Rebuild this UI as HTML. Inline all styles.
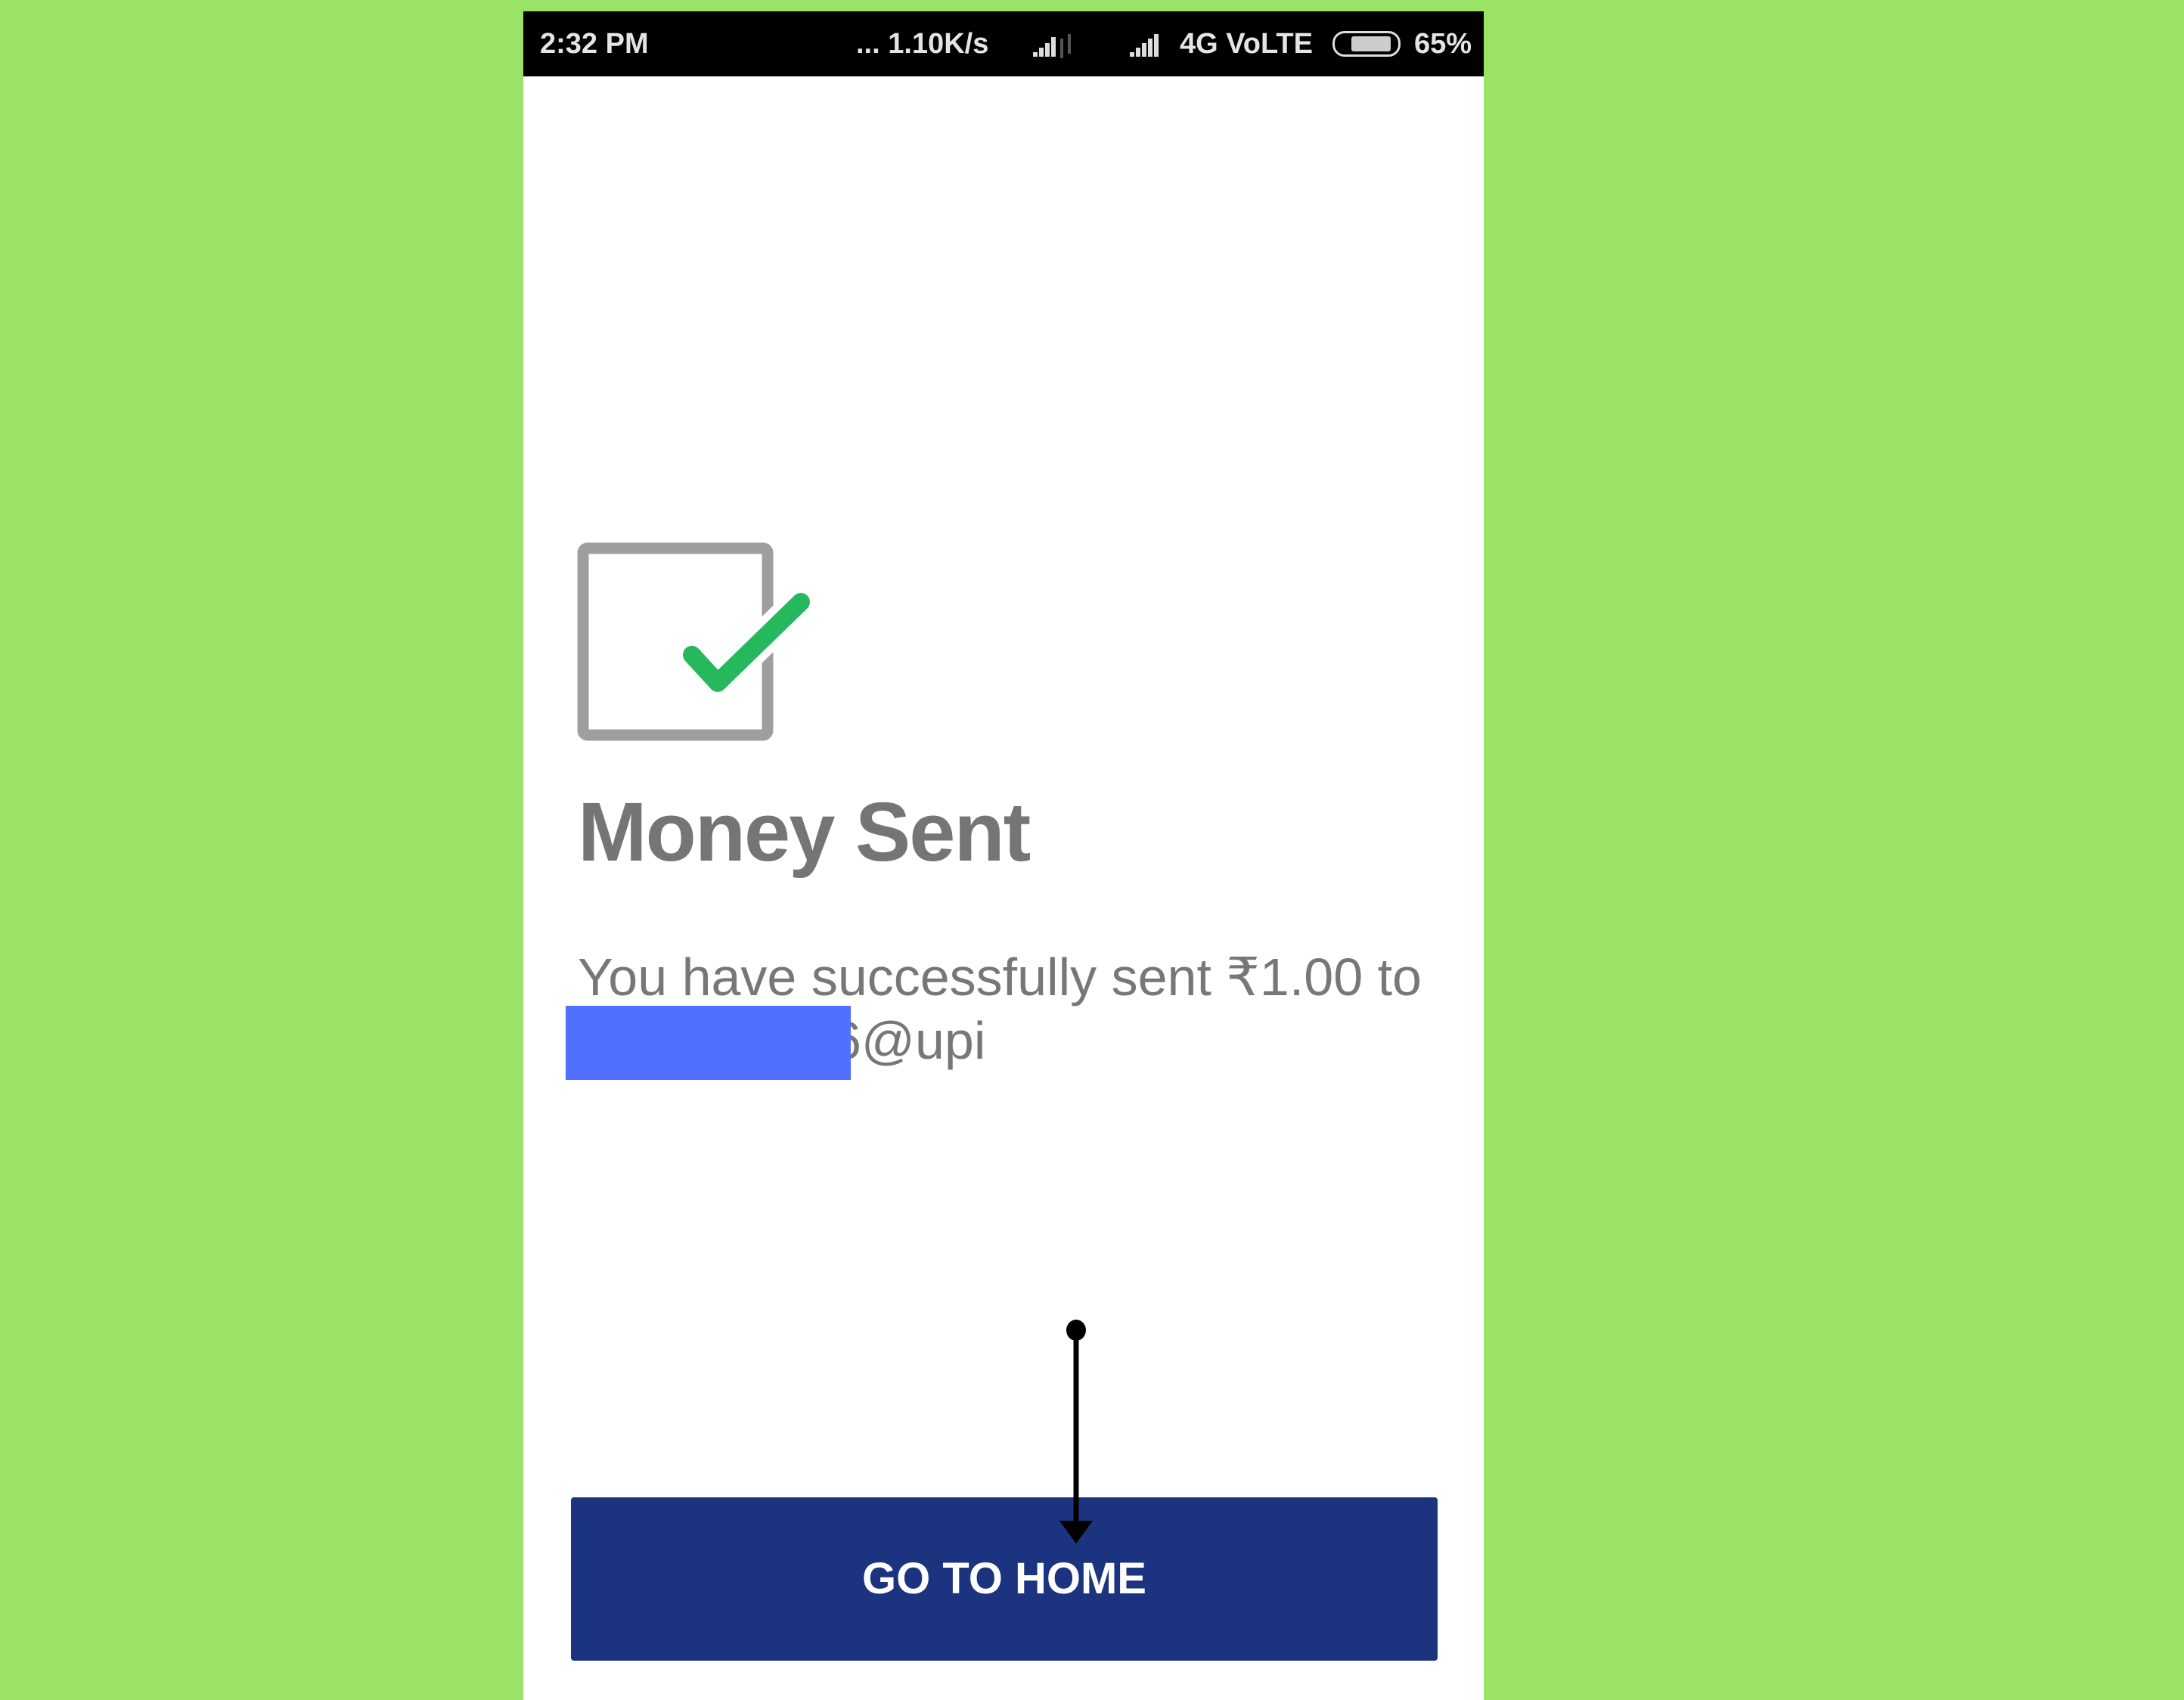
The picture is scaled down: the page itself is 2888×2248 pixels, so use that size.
<!DOCTYPE html>
<html><head><meta charset="utf-8"><style>
html,body{margin:0;padding:0;}
body{width:2888px;height:2248px;background:#9be366;position:relative;overflow:hidden;font-family:"Liberation Sans",sans-serif;}
.phone{position:absolute;left:692px;top:15px;width:1270px;height:2233px;background:#fff;}
.sb{position:absolute;left:0;top:0;width:1270px;height:86px;background:#000;color:#e4e4e4;font-weight:bold;font-size:38px;}
.t{position:absolute;top:22px;}
.title{position:absolute;left:72px;top:1022px;font-size:110px;font-weight:bold;color:#757575;letter-spacing:-2px;}
.body{position:absolute;left:72px;top:1235px;font-size:70px;color:#777;line-height:84px;width:1200px;}
.upi{position:absolute;left:408px;top:1319px;font-size:70px;color:#777;line-height:84px;}
.red{position:absolute;left:56px;top:1315px;width:377px;height:98px;background:#5170ff;}
.btn{position:absolute;left:63px;top:1965px;width:1146px;height:216px;background:#1c3380;border-radius:4px;color:#fff;font-weight:bold;font-size:58px;text-align:center;line-height:216px;}
</style></head><body>
<div class="phone">
 <div class="sb">
  <div class="t" style="left:22px">2:32 PM</div>
  <div class="t" style="left:440px">... 1.10K/s</div>
  <svg style="position:absolute;left:672px;top:26px" width="60" height="36"><path d="M2 34h6v-6h-6zM10 34h6v-12h-6zM18 34h6v-18h-6zM26 34h6v-26h-6z" fill="#ddd"/><path d="M40 10v26M50 4v26" stroke="#555" stroke-width="4"/></svg>
  <svg style="position:absolute;left:800px;top:26px" width="54" height="36"><path d="M2 34h6v-6h-6zM10 34h6v-12h-6zM18 34h6v-18h-6zM26 34h6v-24h-6zM34 34h6v-30h-6z" fill="#ddd"/></svg>
  <div class="t" style="left:868px">4G VoLTE</div>
  <div style="position:absolute;left:1070px;top:26px;width:84px;height:28px;border:3px solid #ddd;border-radius:16px;"><div style="position:absolute;left:22px;top:4px;width:52px;height:20px;background:#ccc;border-radius:3px"></div></div>
  <div class="t" style="left:1178px">65%</div>
 </div>
 <svg style="position:absolute;left:0;top:0" width="1270" height="1100">
  <rect x="79" y="710" width="244" height="247" rx="6" fill="none" stroke="#9e9e9e" stroke-width="15"/>
  <path d="M223 851L257 888L367 781" fill="none" stroke="#fff" stroke-width="44" stroke-linecap="round" stroke-linejoin="round"/>
  <path d="M223 851L257 888L367 781" fill="none" stroke="#26b85c" stroke-width="24" stroke-linecap="round" stroke-linejoin="round"/>
 </svg>
 <div class="title">Money Sent</div>
 <div class="body">You have successfully sent ₹1.00 to</div>
 <div class="upi">6@upi</div>
 <div class="red"></div>
 <div class="btn">GO TO HOME</div>
 <svg style="position:absolute;left:0;top:0" width="1270" height="2233">
  <ellipse cx="731" cy="1744" rx="13" ry="14" fill="#000"/>
  <path d="M731 1744V2000" stroke="#000" stroke-width="7"/>
  <path d="M709 1996L753 1996L731 2026Z" fill="#000"/>
 </svg>
</div>
</body></html>
